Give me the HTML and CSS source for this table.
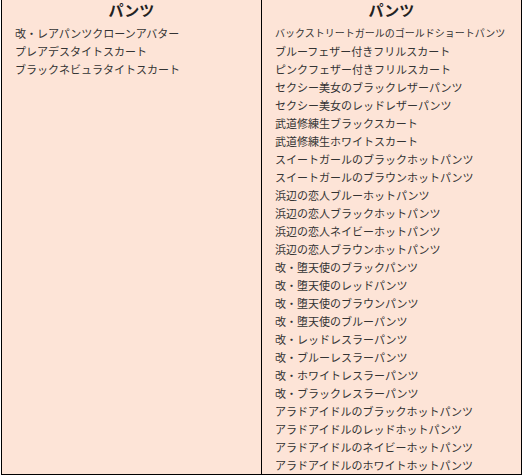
FILE: index.html
```html
<!DOCTYPE html>
<html lang="ja">

<head>
   <meta charset="UTF-8">
   <meta name="viewport" content="width=device-width, initial-scale=1.0">
   <title>パンツ</title>
   <link rel="stylesheet" href="styles.css">
</head>

<body>

   <table class="itemtable">
      <tr>
         <th>パンツ</th>
         <th>パンツ</th>
      </tr>
      <tr>
         <td>
            <div class="line">改・レアパンツクローンアバター</div>
            <div class="line">プレアデスタイトスカート</div>
            <div class="line">ブラックネビュラタイトスカート</div>
         </td>
         <td>
            <div class="line small">バックストリートガールのゴールドショートパンツ</div>
            <div class="line">ブルーフェザー付きフリルスカート</div>
            <div class="line">ピンクフェザー付きフリルスカート</div>
            <div class="line">セクシー美女のブラックレザーパンツ</div>
            <div class="line">セクシー美女のレッドレザーパンツ</div>
            <div class="line">武道修練生ブラックスカート</div>
            <div class="line">武道修練生ホワイトスカート</div>
            <div class="line">スイートガールのブラックホットパンツ</div>
            <div class="line">スイートガールのブラウンホットパンツ</div>
            <div class="line">浜辺の恋人ブルーホットパンツ</div>
            <div class="line">浜辺の恋人ブラックホットパンツ</div>
            <div class="line">浜辺の恋人ネイビーホットパンツ</div>
            <div class="line">浜辺の恋人ブラウンホットパンツ</div>
            <div class="line">改・堕天使のブラックパンツ</div>
            <div class="line">改・堕天使のレッドパンツ</div>
            <div class="line">改・堕天使のブラウンパンツ</div>
            <div class="line">改・堕天使のブルーパンツ</div>
            <div class="line">改・レッドレスラーパンツ</div>
            <div class="line">改・ブルーレスラーパンツ</div>
            <div class="line">改・ホワイトレスラーパンツ</div>
            <div class="line">改・ブラックレスラーパンツ</div>
            <div class="line">アラドアイドルのブラックホットパンツ</div>
            <div class="line">アラドアイドルのレッドホットパンツ</div>
            <div class="line">アラドアイドルのネイビーホットパンツ</div>
            <div class="line">アラドアイドルのホワイトホットパンツ</div>
         </td>
      </tr>
   </table>

</body>

</html>
```

FILE: styles.css
```css
* {
   padding: 0;
   margin: 0;
   box-sizing: border-box;
}

body {
   background-color: white;
   font-family: "Noto Sans CJK JP", "Noto Sans", sans-serif;
   color: #333;
}

.itemtable {
   border-collapse: collapse;
   width: 521px;
   margin-left: 1px;
   background-color: #fde4d7;
   table-layout: fixed;
}

.itemtable th {
   height: 20px;
   line-height: 20px;
   font-size: 15px;
   font-weight: bold;
   color: #222;
   text-align: center;
   border-left: 1px solid #000;
   border-right: 1px solid #000;
}

.itemtable td {
   vertical-align: top;
   font-size: 11px;
   padding: 4px 0 0 13px;
   white-space: nowrap;
   border-left: 1px solid #000;
   border-right: 1px solid #000;
   border-bottom: 1px solid #000;
}

.line {
   height: 18px;
   line-height: 18px;
}

.small {
   font-size: 10px;
}
```
